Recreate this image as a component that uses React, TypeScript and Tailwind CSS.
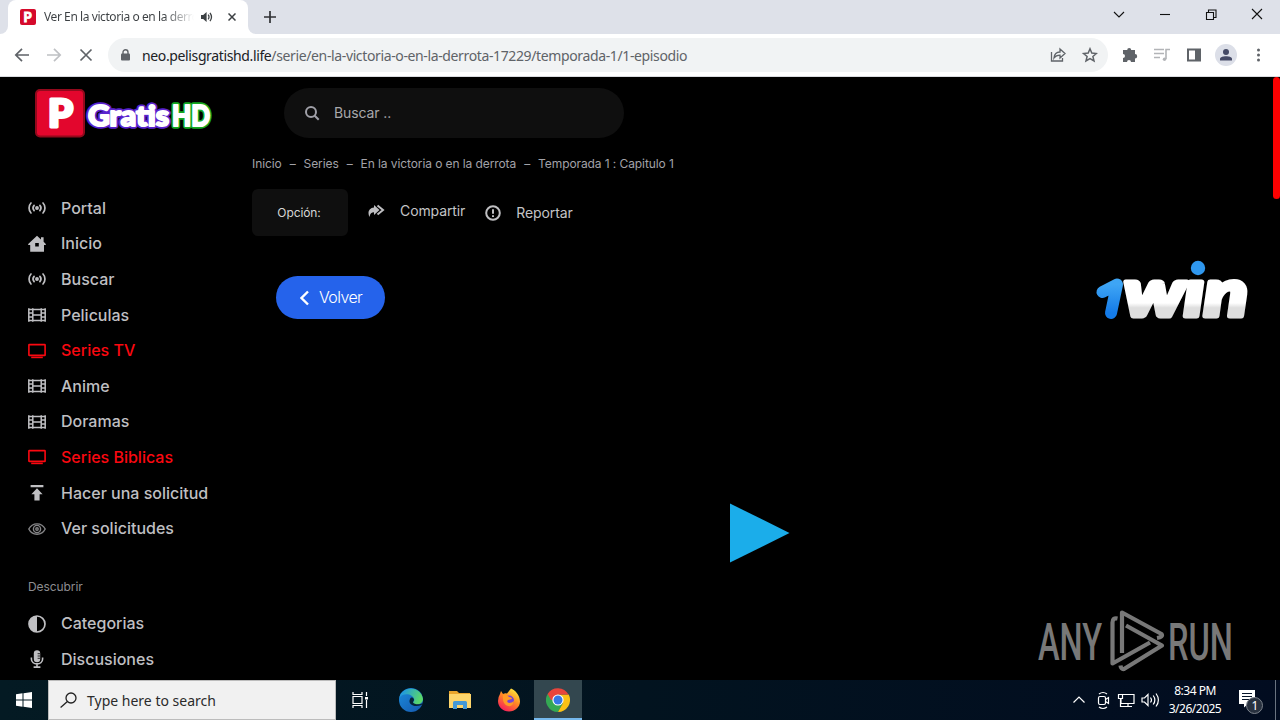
import type { ReactNode } from 'react';

type IconName = 'radio' | 'home' | 'film' | 'tv' | 'upload' | 'eye' | 'contrast' | 'mic';

interface MenuEntry {
  label: string;
  icon: IconName;
  highlighted?: boolean;
}

const mainMenu: MenuEntry[] = [
  { label: 'Portal', icon: 'radio' },
  { label: 'Inicio', icon: 'home' },
  { label: 'Buscar', icon: 'radio' },
  { label: 'Peliculas', icon: 'film' },
  { label: 'Series TV', icon: 'tv', highlighted: true },
  { label: 'Anime', icon: 'film' },
  { label: 'Doramas', icon: 'film' },
  { label: 'Series Biblicas', icon: 'tv', highlighted: true },
  { label: 'Hacer una solicitud', icon: 'upload' },
  { label: 'Ver solicitudes', icon: 'eye' },
];

const discoverMenu: MenuEntry[] = [
  { label: 'Categorias', icon: 'contrast' },
  { label: 'Discusiones', icon: 'mic' },
];

const breadcrumbs = ['Inicio', 'Series', 'En la victoria o en la derrota', 'Temporada 1 : Capitulo 1'];

// 18x18 sidebar drawings
const menuShapes: Record<IconName, ReactNode> = {
  radio: (
    <g fill="none" stroke="currentColor" strokeWidth="1.7" strokeLinecap="round">
      <circle cx="9" cy="9" r="1.1" fill="currentColor" />
      <path d="M6.1 6.4a4 4 0 0 0 0 5.2M11.9 6.4a4 4 0 0 1 0 5.2" />
      <path d="M3 4C.4 6.6.4 11.4 3 14M15 4c2.600 2.600 2.600 7.400 0 10" />
    </g>
  ),
  home: (
    <path
      fill="currentColor"
      fillRule="evenodd"
      d="M9 .8l4 3.6V2.2h2.6v4.6L17.8 9v1H16v6.7H2.2V10H.2V9zM7.2 8v3.6h3.6V8z"
    />
  ),
  film: (
    <g fill="none" stroke="currentColor" strokeWidth="1.5">
      <path d="M.8 2.200v13.600M17.200 2.200v13.600M4.800 2.200v13.600M13.200 2.200v13.600M4.800 3.400h8.400M4.800 14.600h8.400M4.800 9h8.400" />
      <path d="M.8 3.400h4M.8 7h4M.8 10.900h4M.8 14.600h4M13.200 3.400h4M13.200 7h4M13.200 10.900h4M13.200 14.600h4" />
    </g>
  ),
  tv: (
    <g fill="none" stroke="currentColor" strokeWidth="1.6">
      <rect x=".9" y="2.600" width="16.200" height="10.800" rx=".4" />
      <path d="M3.200 15.400h11.600" />
    </g>
  ),
  upload: <path fill="currentColor" d="M2.600 1h12.800v2.200H2.600zM9 4.200l5.600 6h-3v6.200H6.400v-6.200h-3z" />,
  eye: (
    <g fill="none" stroke="currentColor" strokeWidth="1.400">
      <path d="M.8 9C4.200 2.100 13.800 2.100 17.200 9c-3.400 6.900-13 6.900-16.400 0z" />
      <circle cx="9" cy="9" r="3.600" />
      <circle cx="9" cy="9" r="1.200" />
    </g>
  ),
  contrast: (
    <g>
      <circle cx="9" cy="9" r="8" fill="none" stroke="currentColor" strokeWidth="1.700" />
      <path d="M9 1a8 8 0 0 0 0 16z" fill="currentColor" />
    </g>
  ),
  mic: (
    <g fill="none" stroke="currentColor" strokeWidth="1.600">
      <rect x="5.800" y=".2" width="6.400" height="12" rx="3.200" fill="currentColor" stroke="none" />
      <path d="M3.400 7.400v1.500c0 6.600 11.200 6.600 11.200 0V7.400M9 14v3M5.600 17.100h6.800" />
      <path d="M9.600 3.700H12M9.600 6H12M9.600 8.300H12" stroke="#000" strokeWidth=".8" />
    </g>
  ),
};

function MenuItem({ label, icon, highlighted }: MenuEntry) {
  return (
    <a className={`flex h-[35.6px] items-center pl-7 ${highlighted ? 'text-[#fb0810]' : 'text-[#bfbfc2]'}`}>
      <svg
        className={`mt-px h-[18px] w-[18px] shrink-0 ${icon === 'eye' ? 'text-[#858587]' : ''}`}
        viewBox="0 0 18 18"
      >
        {menuShapes[icon]}
      </svg>
      <span className="ml-[15px] whitespace-nowrap text-[16px] font-medium">{label}</span>
    </a>
  );
}

function Favicon() {
  return (
    <svg className="h-4 w-4 shrink-0" viewBox="0 0 16 16">
      <rect width="16" height="16" rx="2" fill="#d50a2b" />
      <text x="3.600" y="12.800" fontFamily="Lato" fontWeight="900" fontSize="13" fill="#fff" stroke="#fff" strokeWidth=".8">
        P
      </text>
    </svg>
  );
}

function TabStrip() {
  return (
    <div className="flex h-[34px] bg-[#dee1e9]">
      <div className="h-full w-2 shrink-0 bg-white">
        <div className="h-full rounded-br-lg bg-[#dee1e9]" />
      </div>
      <div className="flex w-60 shrink-0 items-center rounded-t-lg bg-white pl-3">
        <Favicon />
        <span className="ml-2 w-[150px] overflow-hidden whitespace-nowrap bg-linear-to-r from-[#3c4043] from-80% to-transparent bg-clip-text text-[12px] tracking-[-0.42px] text-transparent">
          Ver En la victoria o en la derrota
        </span>
        <svg className="ml-[7px] h-3 w-3 shrink-0" viewBox="0 0 12 12">
          <path d="M0 4h2.200L5.600 1v10L2.200 8H0z" fill="#3c4043" />
          <path d="M7.200 3.700q1.600 2.300 0 4.600M9 1.800q3 4.200 0 8.400" fill="none" stroke="#3c4043" strokeWidth="1.300" />
        </svg>
        <svg className="ml-[15px] h-2 w-2 shrink-0" viewBox="0 0 8 8">
          <path d="M.5.5l7 7M7.500.5l-7 7" stroke="#3c4043" strokeWidth="1.500" />
        </svg>
      </div>
      <div className="h-full w-2 shrink-0 bg-white">
        <div className="h-full rounded-bl-lg bg-[#dee1e9]" />
      </div>
      <svg className="ml-2 mt-[11px] h-3 w-3" viewBox="0 0 12 12">
        <path d="M6 0v12M0 6h12" stroke="#303134" strokeWidth="1.700" />
      </svg>
      <svg className="ml-auto mr-[17px] mt-2 h-3 w-[150px]" viewBox="0 0 150 12" fill="none" stroke="#111" strokeWidth="1.100">
        <path d="M1 4l5 5 5-5" />
        <path d="M47 6.500h10" />
        <path d="M93.500 4.500h7v7h-7zM95.500 4.500V2h7.500v7.500h-2.500" />
        <path d="M139 1l10 10M149 1l-10 10" />
      </svg>
    </div>
  );
}

function Toolbar() {
  return (
    <div className="flex h-[43px] items-center border-b border-[#dadce0] bg-white">
      <svg className="ml-[14px] h-4 w-20 shrink-0" viewBox="0 0 80 16" fill="none" strokeWidth="1.700">
        <path d="M15 8H2M8 1.800L1.800 8 8 14.200" stroke="#5f6368" />
        <path d="M33 8h13M40 1.800L46.200 8 40 14.200" stroke="#bfc1c4" />
        <path d="M66.500 2.500l11 11M77.500 2.500l-11 11" stroke="#5f6368" />
      </svg>
      <div className="ml-[14px] flex h-[34px] w-[1000px] items-center rounded-full bg-[#f1f3f4] pl-[13px]">
        <svg className="h-3 w-[9px] shrink-0" viewBox="0 0 9 12">
          <path d="M2 5V3.200a2.500 2.500 0 0 1 5 0V5" fill="none" stroke="#5f6368" strokeWidth="1.400" />
          <rect y="4.500" width="9" height="7" rx="1" fill="#5f6368" />
        </svg>
        <span className="ml-3 whitespace-nowrap text-[14px] tracking-[-0.37px] text-[#5f6368]">
          <span className="text-[#202124]">neo.pelisgratishd.life</span>
          /serie/en-la-victoria-o-en-la-derrota-17229/temporada-1/1-episodio
        </span>
        <svg className="ml-auto mr-[10px] h-4 w-12 shrink-0" viewBox="0 0 48 16" fill="none" stroke="#5f6368" strokeWidth="1.300">
          <path d="M1.500 5v9h11v-3M4 11c.4-4 2.600-6 6-6V2l5 4.500L10 11V8.200c-2.800 0-4.600.8-6 2.800z" />
          <path d="M40 1.800l1.800 4.300 4.600.4-3.500 3 1.100 4.500-4-2.400-4 2.400 1.100-4.500-3.500-3 4.600-.4z" strokeWidth="1.500" />
        </svg>
      </div>
      <svg className="ml-3 h-[22px] w-[160px] shrink-0" viewBox="0 0 160 22">
        <path
          d="M4 6h3.200a2 2 0 1 1 4 0H15v4a2.200 2.200 0 1 1 0 4.400V18h-4a2 2 0 1 0-4 0H3v-4a2 2 0 1 0 0-4V6z"
          fill="#5f6368"
        />
        <g stroke="#b2b4b7" strokeWidth="1.600" fill="none">
          <path d="M34 5.500h10M34 9.500h10M34 13.500h6M46 15V5.500h4" />
          <circle cx="44.500" cy="15.200" r="1.700" fill="#b2b4b7" stroke="none" />
        </g>
        <path d="M67 4.500h14v13H67zM69 6.500v9h6v-9z" fillRule="evenodd" fill="#5f6368" />
        <circle cx="106" cy="11" r="11" fill="#dcdfe8" />
        <circle cx="106" cy="8" r="3" fill="#454a66" />
        <path d="M100 16.500v-1.600c0-3.500 12-3.500 12 0v1.600z" fill="#454a66" />
        <g fill="#5f6368">
          <circle cx="138.500" cy="6" r="1.500" />
          <circle cx="138.500" cy="11" r="1.500" />
          <circle cx="138.500" cy="16" r="1.500" />
        </g>
      </svg>
    </div>
  );
}

function SiteLogo() {
  return (
    <svg className="ml-[34px] mt-[11px] h-[50px] w-[182px] shrink-0" viewBox="0 0 182 50">
      <rect x="2" y="2" width="48" height="46.500" rx="4" fill="#e3062d" stroke="#93091c" strokeWidth="2" />
      <text
        x="14" y="39" fontFamily="Lato" fontWeight="900" fontSize="38" fill="#fff"
        stroke="#fff" strokeWidth="3" strokeLinejoin="round" textLength="25" lengthAdjust="spacingAndGlyphs"
      >
        P
      </text>
      <g fontFamily="Lato" fontWeight="900" fontSize="28" strokeLinejoin="round" fill="#fff">
        <g strokeWidth="5.500">
          <text x="54" y="38" textLength="81" lengthAdjust="spacingAndGlyphs" stroke="#5a24cf">Gratis</text>
          <text x="138" y="38" textLength="38" lengthAdjust="spacingAndGlyphs" stroke="#16a822">HD</text>
        </g>
        <g strokeWidth="2" stroke="#fff">
          <text x="54" y="38" textLength="81" lengthAdjust="spacingAndGlyphs">Gratis</text>
          <text x="138" y="38" textLength="38" lengthAdjust="spacingAndGlyphs">HD</text>
        </g>
      </g>
    </svg>
  );
}

function OneWinLogo() {
  return (
    <svg className="absolute right-[22px] top-[172px] h-[90px] w-[164px]" viewBox="0 -10 164 90">
      <defs>
        <linearGradient id="winBlue" x1="0" y1="0" x2="0" y2="1">
          <stop offset="0" stopColor="#3ea5f5" />
          <stop offset="1" stopColor="#147be8" />
        </linearGradient>
        <linearGradient id="winWhite" gradientUnits="userSpaceOnUse" x1="0" y1="20" x2="0" y2="60">
          <stop offset=".6" stopColor="#fff" />
          <stop offset=".72" stopColor="#dedede" />
        </linearGradient>
      </defs>
      <g
        fontFamily="Lato" fontWeight="900" fontStyle="italic" fontSize="67" fill="url(#winWhite)"
        stroke="url(#winWhite)" strokeWidth="5" strokeLinejoin="round"
      >
        <text x="30" y="57" textLength="61" lengthAdjust="spacingAndGlyphs">w</text>
        <text x="90" y="57" textLength="20" lengthAdjust="spacingAndGlyphs">ı</text>
        <text x="110" y="57" textLength="44" lengthAdjust="spacingAndGlyphs">n</text>
      </g>
      <path d="M8.500 33L23 25.500 17 54" fill="none" stroke="url(#winBlue)" strokeWidth="12" strokeLinecap="round" strokeLinejoin="round" />
      <circle cx="104" cy="9" r="7.200" fill="#2f97ee" />
    </svg>
  );
}

function Watermark() {
  return (
    <svg className="absolute right-[38px] top-[531px] h-[72px] w-[204px]" viewBox="0 0 204 72" fill="#787878">
      <g fontFamily="Roboto" fontSize="52" fontWeight="500">
        <text x="0" y="51.500" textLength="64" lengthAdjust="spacingAndGlyphs">ANY</text>
        <text x="130" y="51.500" textLength="65" lengthAdjust="spacingAndGlyphs">RUN</text>
      </g>
      <g fill="none" stroke="#787878" strokeWidth="4.200" strokeLinejoin="round">
        <path d="M84 45V4.500L123.500 26q2 3-4.500 4" />
        <path d="M88 17.500L124 37.500 86 61q-3 .5-3.500-3.500" />
        <path d="M79.500 10.500q-5-1-5 4V55.500L112 34.500" />
      </g>
    </svg>
  );
}

function Sidebar() {
  return (
    <aside className="w-[252px] shrink-0">
      <nav className="mt-[49px]">
        {mainMenu.map((entry) => (
          <MenuItem key={entry.label} {...entry} />
        ))}
      </nav>
      <p className="mt-8 pl-7 text-[12px] leading-[18px] tracking-[-0.08px] text-[#8d8d90]">Descubrir</p>
      <nav className="mt-[9.500px]">
        {discoverMenu.map((entry) => (
          <MenuItem key={entry.label} {...entry} />
        ))}
      </nav>
    </aside>
  );
}

function Player() {
  return (
    <main className="flex-1">
      <div className="mt-[13px] flex h-5 items-center gap-2 whitespace-nowrap text-[12px] tracking-[-0.09px] text-[#a2a2a8]">
        {breadcrumbs.map((crumb, i) => (
          <span key={crumb} className="flex gap-2">
            {i > 0 && <span>–</span>}
            {crumb}
          </span>
        ))}
      </div>
      <div className="mt-[15px] flex h-[47px] text-[14px] tracking-[-0.1px] text-[#c4c4c6]">
        <div className="flex w-24 items-center justify-center rounded-md bg-[#0f0f0f] pr-[2px] text-[12px] text-[#d6d6d6]">
          Opción:
        </div>
        <div className="ml-5 flex h-[43px] items-center">
          <svg className="h-4 w-[17px]" viewBox="0 0 17 16" fill="#bfbfc2">
            <path d="M6 2l5.500 5L6 12V9.200C3.500 9.200 2 10.500 1.500 14-.8 9.500 1 5 6 4.500z" />
            <path d="M9.500 2.500l5.500 4.500-5.500 4.500" fill="none" stroke="#bfbfc2" strokeWidth="2" />
          </svg>
          <span className="ml-[15px]">Compartir</span>
        </div>
        <div className="ml-5 flex h-[47px] items-center">
          <svg className="mt-px h-4 w-4" viewBox="0 0 16 16" fill="none" stroke="#bfbfc2" strokeWidth="2">
            <circle cx="8" cy="8" r="6.800" />
            <path d="M8 4.200v4.500M8 10.200v1.800" />
          </svg>
          <span className="ml-[15px]">Reportar</span>
        </div>
      </div>
      <button className="ml-6 mt-10 flex h-[43px] w-[109px] items-center rounded-full bg-[#2563eb] pl-6 text-[16px] font-light tracking-[-0.6px] text-white">
        <svg className="mt-px h-4 w-[9px]" viewBox="0 0 9 16">
          <path d="M8 1.500L1.500 8 8 14.500" fill="none" stroke="#fff" strokeWidth="2.400" />
        </svg>
        <span className="-mt-px ml-[10px]">Volver</span>
      </button>
      <svg className="ml-[477.500px] mt-[184px] h-[60px] w-[60px]" viewBox="0 0 60 60">
        <path d="M0 .5L59.500 30 0 59.500z" fill="#1badea" />
      </svg>
    </main>
  );
}

function SitePage() {
  return (
    <div className="relative h-[603px] overflow-hidden bg-black font-['Inter',sans-serif]">
      <div className="flex h-16">
        <SiteLogo />
        <div className="ml-[68px] mt-[11px] flex h-[50px] w-[340px] items-center rounded-full bg-[#0f0f0f] pl-5 text-[14px] tracking-[-0.1px] text-[#a8a8ab]">
          <svg className="h-4 w-4" viewBox="0 0 16 16" fill="none" stroke="#a0a0a8" strokeWidth="2">
            <circle cx="7" cy="7" r="5" />
            <path d="M10.700 10.700l4 4" />
          </svg>
          <span className="-mt-px ml-[14px]">Buscar ..</span>
        </div>
      </div>
      <div className="flex">
        <Sidebar />
        <Player />
      </div>
      <OneWinLogo />
      <Watermark />
      <div className="absolute right-0 top-0 h-[122px] w-[7px] rounded bg-[#fb0000]" />
    </div>
  );
}

function PinnedApps() {
  return (
    <div className="flex h-full">
      <div className="flex w-12 items-center justify-center">
        <svg className="h-[18px] w-[18px]" viewBox="0 0 18 18" fill="none" stroke="#fff" strokeWidth="1.200">
          <path d="M2 1v2.500h9V1M2 17v-2.500h9V17M2 5.500h9v7H2zM15.500 1v4M15.500 9v8" />
          <path d="M14 6h3v2.500h-3z" fill="#fff" stroke="none" />
        </svg>
      </div>
      <div className="flex w-[52px] items-center justify-center pl-[2px]">
        <svg className="h-6 w-6" viewBox="0 0 24 24">
          <defs>
            <linearGradient id="edgeTop" x1="0" y1="0" x2="1" y2=".3">
              <stop offset=".2" stopColor="#229bdc" />
              <stop offset="1" stopColor="#5ad76a" />
            </linearGradient>
            <linearGradient id="edgeBody" x1="0" y1="0" x2="1" y2="1">
              <stop offset="0" stopColor="#1a8bdc" />
              <stop offset="1" stopColor="#1558ae" />
            </linearGradient>
          </defs>
          <circle cx="12" cy="12" r="12" fill="url(#edgeBody)" />
          <path d="M.3 10C2-2 22-3 24 11c0 6-9 7-10 4 0-1 1.500-1.500 1.200-3.500C14.500 6 4 4 .3 10z" fill="url(#edgeTop)" />
          <path d="M11 11c-2.500 5 4 9 11.500 6l1.500-2c-3 2-9 1.500-10-.5 0-1.500 1-1.500 1-3-1-2.500-3-2.500-4-.5z" fill="#06233a" />
        </svg>
      </div>
      <div className="flex w-12 items-center justify-center">
        <svg className="h-[19px] w-[22px]" viewBox="0 0 22 19">
          <path d="M0 0h8l2 2h11v6H0z" fill="#e9a52c" />
          <path d="M0 3h22v14H0z" fill="#fdd56b" />
          <path d="M4 18v-6.500q0-1.500 1.500-1.500h11q1.500 0 1.500 1.500V18h-4v-4H8v4z" fill="#4499d6" />
        </svg>
      </div>
      <div className="flex w-[50px] items-center justify-center">
        <svg className="h-6 w-6" viewBox="0 0 24 24">
          <defs>
            <linearGradient id="foxFire" x1=".8" y1="0" x2=".2" y2="1">
              <stop offset="0" stopColor="#fff03f" />
              <stop offset=".45" stopColor="#ff8a24" />
              <stop offset="1" stopColor="#f6145e" />
            </linearGradient>
          </defs>
          <path d="M4 3l2 3q2-1 4-.5L14 .5C18 2 23 7 23 13.500 23 19 18 23.500 12 23.500S1 19 1 13q0-4 2-7z" fill="url(#foxFire)" />
          <circle cx="12" cy="12.500" r="5" fill="#7542d8" />
          <path d="M6 7q4-1 6 2 3 0 3 2l-4 1q-2 2 1 3 3 0 5-2-1 6-6 5-6-2-5-11z" fill="#ff9a24" />
        </svg>
      </div>
      <div className="flex w-12 items-center justify-center border-b-2 border-[#76b9ed] bg-[#33474f]">
        <svg className="mt-[2px] h-6 w-6" viewBox="0 0 24 24">
          <path d="M12 12h-3L1.600 6A12 12 0 0 0 12 24l5-9z" fill="#34a853" />
          <path d="M12 6.500h10.700A12 12 0 0 1 12 24l5-9z" fill="#fbc116" />
          <path d="M1.600 6a12 12 0 0 1 20.900.5H12v5.500H5z" fill="#e8453c" />
          <circle cx="12" cy="12" r="5.600" fill="#fff" />
          <circle cx="12" cy="12" r="4.500" fill="#3478e5" />
        </svg>
      </div>
    </div>
  );
}

function Taskbar() {
  return (
    <div className="flex h-10 bg-linear-to-r from-[#041a23] via-[#02131f] to-[#020c20] text-white">
      <div className="flex w-12 items-center justify-center">
        <svg className="h-4 w-4" viewBox="0 0 16 16" fill="#fff">
          <path d="M0 2.200l6.500-.9v6.200H0zM7.500 1.200L16 0v7.500H7.500zM0 8.500h6.500v6.200L0 13.800zM7.500 8.500H16V16l-8.500-1.200z" />
        </svg>
      </div>
      <div className="flex w-72 items-center border border-[#bcbcbc] bg-[#f1f1f1] pl-[11px] text-[14px] text-[#2b2b2b]">
        <svg className="h-4 w-[17px]" viewBox="0 0 17 16" fill="none" stroke="#222" strokeWidth="1.300">
          <circle cx="11" cy="6" r="5" />
          <path d="M7.400 9.600L.6 15.500" />
        </svg>
        <span className="ml-[10px] whitespace-nowrap">Type here to search</span>
      </div>
      <PinnedApps />
      <div className="ml-auto flex items-center">
        <svg className="h-5 w-[90px]" viewBox="0 0 90 20" fill="none" stroke="#fff" strokeWidth="1.200">
          <path d="M1.500 12.500L7 7l5.500 5.500" />
          <rect x="26.500" y="6.500" width="7" height="8" rx="1.500" />
          <path d="M33.500 9.500l3-2v6l-3-2M27 4q4-3 8 0M27 17q4 3 8 0" />
          <path d="M51 4.500h11v9H49V9M56 13.500v3M52 16.500h8M46.500 4.500h4v4h-4zM48.500 8.500v8h4" />
          <path d="M70 8h2.500L76 4.500v11L72.500 12H70zM78.500 7.500q2 2.500 0 5M81.200 5.500q3.300 4.500 0 9M84 3.500q4.800 6.500 0 13" />
        </svg>
        <div className="ml-[2px] w-[62px] whitespace-nowrap text-center text-[12px] leading-[18px] tracking-[-0.5px]">
          <div>8:34 PM</div>
          <div>3/26/2025</div>
        </div>
        <svg className="ml-[13px] mt-1 h-6 w-[26px]" viewBox="0 0 26 24">
          <path d="M0 0h16v14H9l-4 3.500V14H0z" fill="#fff" />
          <path d="M3 3.500h10M3 6.500h10M3 9.500h7" stroke="#07152a" strokeWidth="1.200" />
          <circle cx="15.500" cy="15.500" r="8" fill="#28313f" stroke="#7d838c" />
          <text x="12.500" y="20" fontSize="12" fill="#fff" fontFamily="Noto Sans">1</text>
        </svg>
        <div className="ml-[10px] mr-1 h-10 w-px bg-[#6a7380]" />
      </div>
    </div>
  );
}

export default function App() {
  return (
    <div className="h-[720px] w-[1280px] overflow-hidden bg-black font-['Noto_Sans',sans-serif]">
      <TabStrip />
      <Toolbar />
      <SitePage />
      <Taskbar />
    </div>
  );
}
